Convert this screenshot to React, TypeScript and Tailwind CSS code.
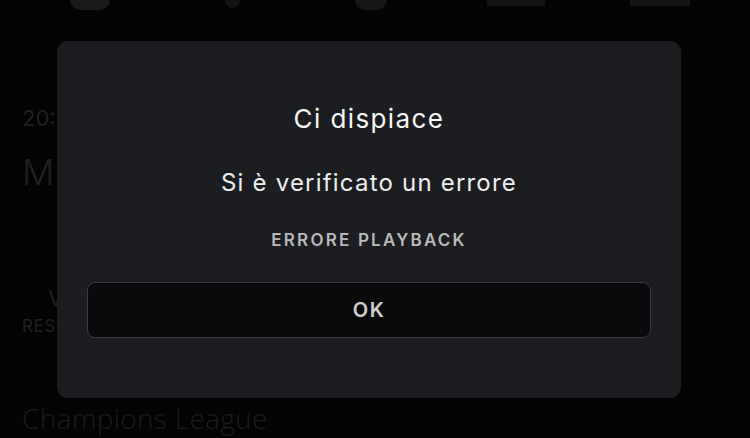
import React from "react";

export default function App() {
  return (
    <div
      className="relative w-[750px] h-[438px] overflow-hidden bg-[#030303]"
      style={{ fontFamily: "Inter, 'Noto Sans', sans-serif" }}
    >
      {/* page behind the dialog */}
      <div className="flex h-full">
        <div className="flex-1 flex flex-col">
          <div className="flex items-start h-[30px] px-[70px] gap-[100px]">
            <div className="w-[40px] h-[10px] rounded-b-full bg-[#1a1a1a]" />
            <div className="ml-[15px] w-[15px] h-[8px] rounded-b-full bg-[#141414]" />
            <div className="ml-[15px] w-[32px] h-[10px] rounded-b-full bg-[#171717]" />
            <div className="w-[58px] h-[6px] bg-[#141414]" />
            <div className="-ml-[15px] w-[60px] h-[6px] bg-[#141414]" />
          </div>
          <div className="flex flex-col pl-[22px] text-[#202020]">
            <p className="mt-[76px] text-[22px] leading-6">20:45</p>
            <p className="mt-[22px] text-[36px] leading-10 font-light">Milan - Inter</p>
            <p className="mt-[94px] text-[22px] leading-6 pl-[26px]">V</p>
            <p className="mt-[6px] text-[17px] leading-5 tracking-[0.5px]">RESULT</p>
            <p
              className="mt-[66px] text-[28px] leading-8 font-light text-[#1c1c1c] tracking-[0.3px]"
              style={{ fontFamily: "'Open Sans', sans-serif" }}
            >
              Champions League
            </p>
          </div>
        </div>
        <div className="w-[4px] h-full bg-[#17221d]" />
      </div>

      {/* dialog */}
      <div className="absolute left-[57px] top-[41px] w-[624px] h-[357px] rounded-[11px] bg-[#1b1d20] flex flex-col items-center px-[30px]">
        <p className="mt-[63px] text-[26px] leading-[30px] text-[#f6f6f6] tracking-[1.4px]">
          Ci dispiace
        </p>
        <p className="mt-[34px] text-[24px] leading-[30px] text-[#ededed] tracking-[1.2px]">
          Si è verificato un errore
        </p>
        <p className="mt-[32px] text-[17px] leading-5 font-semibold tracking-[2.2px] text-[#b9b9b9]">
          ERRORE PLAYBACK
        </p>
        <button className="mt-[32px] w-full h-[56px] rounded-[8px] border-[1.5px] border-[#3a3d40] bg-[#080a0b] text-[20px] font-semibold tracking-[1.5px] text-[#d0d0d0]">
          OK
        </button>
      </div>
    </div>
  );
}
